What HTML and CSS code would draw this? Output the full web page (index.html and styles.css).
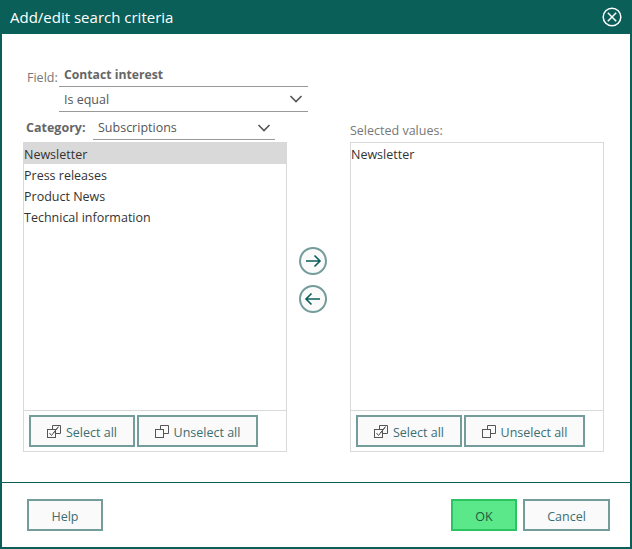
FILE: index.html
```html
<!DOCTYPE html>
<html lang="en">
<head>
  <meta charset="UTF-8">
  <title>Add/edit search criteria</title>
  <link rel="stylesheet" href="styles.css">
</head>
<body>
<div class="dialog">
  <div class="titlebar">
    <span class="title">Add/edit search criteria</span>
    <svg class="close-icon" width="20" height="20" viewBox="0 0 20 20">
      <circle cx="10" cy="10" r="8.8"/>
      <path d="M5.8 5.8L14.2 14.2M14.2 5.8L5.8 14.2"/>
    </svg>
  </div>

  <div class="content">
    <div class="field-row">
      <span class="field-label">Field:</span>
      <div class="field-value">Contact interest</div>
    </div>
    <div class="operator-row">
      <div class="select operator">
        <span>Is equal</span>
        <svg class="chevron" width="14" height="8" viewBox="0 0 14 8"><path d="M1.5 1L7 6.5L12.5 1"/></svg>
      </div>
    </div>

    <div class="columns">
      <div class="column column-left">
        <div class="column-head">
          <span class="category-label">Category:</span>
          <div class="select category">
            <span>Subscriptions</span>
            <svg class="chevron" width="14" height="8" viewBox="0 0 14 8"><path d="M1.5 1L7 6.5L12.5 1"/></svg>
          </div>
        </div>
        <div class="list-box">
          <ul class="list">
            <li class="selected">Newsletter</li>
            <li>Press releases</li>
            <li>Product News</li>
            <li>Technical information</li>
          </ul>
          <div class="list-tools">
            <button class="btn tool-select">
              <svg class="tool-icon" width="14" height="13" viewBox="0 0 14 13"><path d="M5.5 4V0.5H13.5V8.5H9"/><rect x="0.5" y="4.5" width="8" height="8"/><path d="M2.5 8L4.5 10.5L11.5 1.5M6.5 8L11 2.5"/></svg>
              Select all
            </button>
            <button class="btn tool-unselect">
              <svg class="tool-icon" width="14" height="13" viewBox="0 0 14 13"><path d="M5.5 4.5V0.5H13.5V8.5H8.5"/><rect x="0.5" y="4.5" width="8" height="8"/></svg>
              Unselect all
            </button>
          </div>
        </div>
      </div>

      <div class="move-buttons">
        <button class="move-btn">
          <svg width="18" height="14" viewBox="0 0 18 14"><path d="M2 7H16M10.5 1.5L16 7L10.5 12.5"/></svg>
        </button>
        <button class="move-btn">
          <svg width="18" height="14" viewBox="0 0 18 14"><path d="M16 7H2M7.5 1.5L2 7L7.5 12.5"/></svg>
        </button>
      </div>

      <div class="column column-right">
        <div class="column-head">
          <span class="selected-label">Selected values:</span>
        </div>
        <div class="list-box">
          <ul class="list">
            <li>Newsletter</li>
          </ul>
          <div class="list-tools">
            <button class="btn tool-select">
              <svg class="tool-icon" width="14" height="13" viewBox="0 0 14 13"><path d="M5.5 4V0.5H13.5V8.5H9"/><rect x="0.5" y="4.5" width="8" height="8"/><path d="M2.5 8L4.5 10.5L11.5 1.5M6.5 8L11 2.5"/></svg>
              Select all
            </button>
            <button class="btn tool-unselect">
              <svg class="tool-icon" width="14" height="13" viewBox="0 0 14 13"><path d="M5.5 4.5V0.5H13.5V8.5H8.5"/><rect x="0.5" y="4.5" width="8" height="8"/></svg>
              Unselect all
            </button>
          </div>
        </div>
      </div>
    </div>
  </div>

  <div class="footer">
    <button class="btn btn-help">Help</button>
    <div class="footer-right">
      <button class="btn btn-ok">OK</button>
      <button class="btn btn-cancel">Cancel</button>
    </div>
  </div>
</div>
</body>
</html>
```

FILE: styles.css
```css
* {
  box-sizing: border-box;
}

html, body {
  margin: 0;
  padding: 0;
  height: 100%;
}

body {
  font-family: 'Open Sans', 'Noto Sans', Arial, sans-serif;
  font-size: 12.5px;
  color: #333;
  background-color: #fff;
  overflow: hidden;
}

.dialog {
  display: flex;
  flex-direction: column;
  width: 632px;
  height: 549px;
  border: 2px solid #0a5f59;
  border-top: none;
  background-color: #fff;
}

.titlebar {
  display: flex;
  justify-content: space-between;
  align-items: center;
  height: 34px;
  flex-shrink: 0;
  margin: 0 -2px;
  padding: 0 10px 0 10px;
  background-color: #0a5f59;
}

.title {
  color: #fff;
  font-size: 15px;
}

.close-icon {
  fill: none;
  stroke: #fff;
  stroke-width: 1.5;
}

.content {
  flex: 1;
  padding: 30px 26px 0 21px;
}

.field-row {
  display: flex;
  align-items: flex-end;
  height: 23px;
  padding-left: 4px;
}

.field-label {
  width: 32px;
  margin-bottom: 1px;
  color: #777;
}

.field-value {
  width: 249px;
  height: 23px;
  padding: 2px 0 0 5px;
  border-bottom: 1px solid #999;
  color: #666;
  font-weight: 700;
  font-size: 12.2px;
}

.operator-row {
  padding-left: 36px;
}

.select {
  display: flex;
  justify-content: space-between;
  align-items: center;
  border-bottom: 1px solid #999;
  color: #555;
}

.operator {
  width: 249px;
  height: 25px;
  padding: 0 5px;
}

.category {
  width: 182px;
  height: 24px;
  padding: 0 4px 0 5px;
}

.chevron {
  fill: none;
  stroke: #555;
  stroke-width: 1.6;
}

.columns {
  display: flex;
  margin-top: 4px;
}

.column-left {
  width: 264px;
}

.column-right {
  width: 254px;
}

.column-head {
  display: flex;
  align-items: center;
  height: 26px;
}

.column-left .column-head {
  align-items: flex-start;
  padding-left: 3px;
}

.column-right .column-head {
  align-items: flex-end;
  padding-bottom: 3px;
}

.category-label {
  width: 67px;
  padding-top: 3px;
  font-weight: 700;
  font-size: 12.5px;
  color: #666;
}

.selected-label {
  color: #777;
}

.list-box {
  display: flex;
  flex-direction: column;
  height: 310px;
  border: 1px solid #d9d9d9;
}

.list {
  flex: 1;
  margin: 0;
  padding: 0;
  list-style: none;
}

.list li {
  height: 21px;
  line-height: 23px;
  color: #333;
}

.list li.selected {
  background-color: #d9d9d9;
}

.list-tools {
  display: flex;
  gap: 2px;
  height: 41px;
  padding: 4px 5px;
  border-top: 1px solid #d9d9d9;
}

.btn {
  display: inline-flex;
  justify-content: center;
  align-items: center;
  height: 32px;
  padding: 2px 0 0 0;
  border: 2px solid #739c9b;
  background-color: #fafafa;
  color: #3c6e71;
  font-family: inherit;
  font-size: 12.5px;
  cursor: pointer;
}

.tool-select {
  width: 106px;
}

.tool-unselect {
  width: 121px;
}

.tool-icon {
  margin-right: 5px;
  margin-top: -1px;
  fill: none;
  stroke: #555;
  stroke-width: 1;
}

.move-buttons {
  display: flex;
  flex-direction: column;
  align-items: center;
  gap: 10px;
  width: 63px;
  padding-top: 131px;
  padding-right: 11px;
}

.move-btn {
  display: flex;
  justify-content: center;
  align-items: center;
  width: 28px;
  height: 28px;
  padding: 0;
  border: 2px solid #739c9b;
  border-radius: 50%;
  background-color: #fafafa;
}

.move-btn svg {
  fill: none;
  stroke: #0a5f59;
  stroke-width: 1.6;
}

.footer {
  display: flex;
  justify-content: space-between;
  align-items: flex-start;
  height: 65px;
  flex-shrink: 0;
  padding: 16px 20px 0 25px;
  border-top: 1px solid #0a5f59;
}

.footer-right {
  display: flex;
  gap: 6px;
}

.btn-help {
  width: 76px;
}

.btn-ok {
  width: 66px;
  border-color: #2cc463;
  background-color: #5ae88a;
  color: #1f5a3c;
}

.btn-cancel {
  width: 87px;
}
```
